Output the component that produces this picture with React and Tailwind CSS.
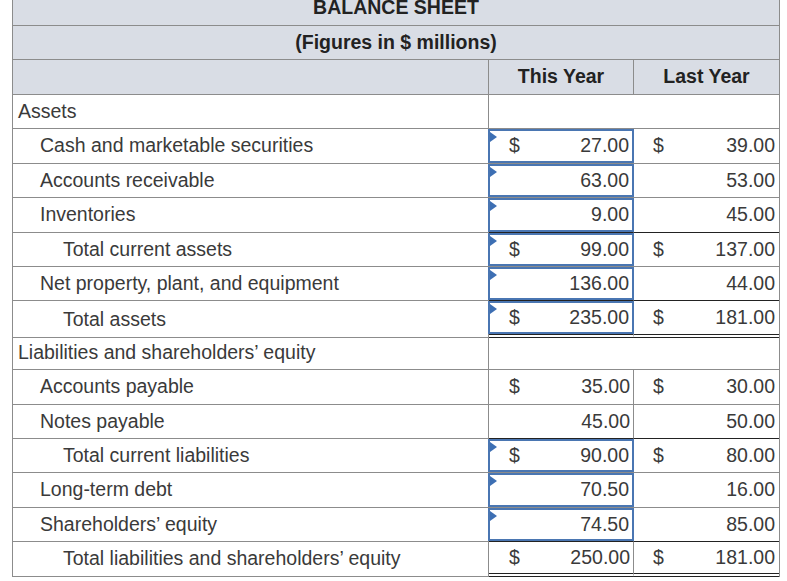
import React from "react";

const rows = [
  { label: "Assets", level: 0, section: true, h: 34 },
  { label: "Cash and marketable securities", level: 1, ty: "27.00", ly: "39.00", dollar: true, input: true, h: 35 },
  { label: "Accounts receivable", level: 1, ty: "63.00", ly: "53.00", input: true, h: 34 },
  { label: "Inventories", level: 1, ty: "9.00", ly: "45.00", input: true, h: 35 },
  { label: "Total current assets", level: 2, ty: "99.00", ly: "137.00", dollar: true, input: true, rule: true, h: 34 },
  { label: "Net property, plant, and equipment", level: 1, ty: "136.00", ly: "44.00", input: true, h: 34 },
  { label: "Total assets", level: 2, ty: "235.00", ly: "181.00", dollar: true, input: true, rule: true, double: true, h: 35 },
  { label: "Liabilities and shareholders’ equity", level: 0, section: true, h: 34 },
  { label: "Accounts payable", level: 1, ty: "35.00", ly: "30.00", dollar: true, h: 35 },
  { label: "Notes payable", level: 1, ty: "45.00", ly: "50.00", h: 34 },
  { label: "Total current liabilities", level: 2, ty: "90.00", ly: "80.00", dollar: true, input: true, rule: true, h: 34 },
  { label: "Long-term debt", level: 1, ty: "70.50", ly: "16.00", input: true, h: 35 },
  { label: "Shareholders’ equity", level: 1, ty: "74.50", ly: "85.00", input: true, h: 34 },
  { label: "Total liabilities and shareholders’ equity", level: 2, ty: "250.00", ly: "181.00", dollar: true, rule: true, double: true, h: 35 },
];

const indent = ["pl-[5px]", "pl-[27px]", "pl-[50px]"];

function valueBorder(row, next) {
  if (row.double) return "border-b-[4px] border-double border-[#222]";
  if (next && next.rule) return "border-b border-[#222]";
  return "border-b border-[#8c8c8c]";
}

function InputBox({ children }) {
  return (
    <div className="relative -ml-px -mr-px flex h-full items-center justify-between border-2 border-[#4a76b2] pl-[19px] pr-[3px]">
      {/* little marker in the corner */}
      <span className="absolute left-0 top-[1px] h-0 w-0 border-y-[5px] border-l-[7px] border-y-transparent border-l-[#3d6fb3]" />
      {children}
    </div>
  );
}

export default function App() {
  return (
    <div
      className="min-h-screen bg-white text-[19.5px] text-[#3a3a3a]"
      style={{ fontFamily: '"Liberation Sans", Arial, sans-serif' }}
    >
      <div className="-mt-[9px] ml-[12px] w-[768px] border-x border-[#8c8c8c]">
        {/* header */}
        <div className="flex h-[35px] items-center justify-center border-b border-[#8c8c8c] bg-[#d9dde5] font-bold text-[#222]">
          BALANCE SHEET
        </div>
        <div className="flex h-[34px] items-center justify-center border-b border-[#8c8c8c] bg-[#d9dde5] font-bold text-[#222]">
          (Figures in $ millions)
        </div>
        <div className="grid h-[35px] grid-cols-[476px_145px_1fr] border-b border-[#8c8c8c] bg-[#d9dde5] font-bold text-[#222]">
          <div className="border-r border-[#8c8c8c]" />
          <div className="flex items-center justify-center border-r border-[#8c8c8c]">This Year</div>
          <div className="flex items-center justify-center">Last Year</div>
        </div>

        {/* body */}
        {rows.map((row, i) => {
          const next = rows[i + 1];
          return (
            <div
              key={row.label}
              className="grid grid-cols-[476px_145px_1fr]"
              style={{ height: row.h }}
            >
              <div className={`flex items-center border-b border-r border-[#8c8c8c] ${indent[row.level]}`}>
                {row.label}
              </div>
              {row.section ? (
                <div className="col-span-2 border-b border-[#8c8c8c]" />
              ) : (
                <>
                  <div className={`border-r border-r-[#8c8c8c] ${valueBorder(row, next)}`}>
                    {row.input ? (
                      <InputBox>
                        <span>{row.dollar ? "$" : ""}</span>
                        <span>{row.ty}</span>
                      </InputBox>
                    ) : (
                      <div className="flex h-full items-center justify-between pl-[20px] pr-[3px]">
                        <span>{row.dollar ? "$" : ""}</span>
                        <span>{row.ty}</span>
                      </div>
                    )}
                  </div>
                  <div className={`flex items-center justify-between pl-[19px] pr-[4px] ${valueBorder(row, next)}`}>
                    <span>{row.dollar ? "$" : ""}</span>
                    <span>{row.ly}</span>
                  </div>
                </>
              )}
            </div>
          );
        })}
      </div>
    </div>
  );
}
